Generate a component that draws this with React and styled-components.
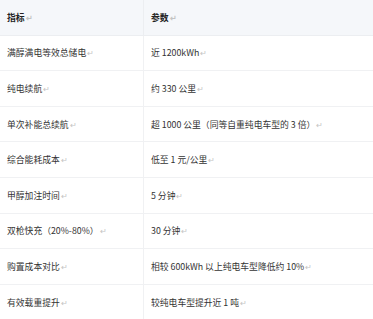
import React from 'react'
import styled, { createGlobalStyle } from 'styled-components'

const GlobalStyle = createGlobalStyle`
  html, body {
    margin: 0;
    padding: 0;
    background: #ffffff;
  }
  body {
    font-family: "Noto Sans CJK SC", "Noto Sans", sans-serif;
    color: #333333;
  }
`

const rows = [
  ['满醇满电等效总储电', '近 1200kWh'],
  ['纯电续航', '约 330 公里'],
  ['单次补能总续航', '超 1000 公里（同等自重纯电车型的 3 倍）'],
  ['综合能耗成本', '低至 1 元/公里'],
  ['甲醇加注时间', '5 分钟'],
  ['双枪快充（20%-80%）', '30 分钟'],
  ['购置成本对比', '相较 600kWh 以上纯电车型降低约 10%'],
  ['有效载重提升', '较纯电车型提升近 1 吨'],
]

const Table = styled.table`
  width: 100%;
  border-collapse: collapse;
  table-layout: fixed;
  font-size: 8.8px;
`

const Head = styled.th`
  background: #f5f7fa;
  font-weight: 700;
  color: #222222;
  text-align: left;
  height: 34.6px;
  padding: 0 7px;
  border-bottom: 1px solid #eceef1;
  border-right: ${p => (p.$last ? 'none' : '1px solid #eceef1')};
  width: ${p => p.$w || 'auto'};
`

const Cell = styled.td`
  height: 34.6px;
  padding: 0 7px;
  border-bottom: 1px solid #f0f1f3;
  border-right: ${p => (p.$last ? 'none' : '1px solid #f0f1f3')};
  white-space: nowrap;
  color: #333333;
`

const Mark = styled.span`
  color: #c4c4c4;
  font-size: 7.5px;
  margin-left: 1px;
`

const Text = ({ children }) => (
  <>
    {children}
    <Mark>↵</Mark>
  </>
)

const App = () => {
  return (
    <>
      <GlobalStyle />
      <Table>
        <thead>
          <tr>
            <Head $w="129px"><Text>指标</Text></Head>
            <Head $last><Text>参数</Text></Head>
          </tr>
        </thead>
        <tbody>
          {rows.map(([k, v]) => (
            <tr key={k}>
              <Cell><Text>{k}</Text></Cell>
              <Cell $last><Text>{v}</Text></Cell>
            </tr>
          ))}
        </tbody>
      </Table>
    </>
  )
}

export default App
